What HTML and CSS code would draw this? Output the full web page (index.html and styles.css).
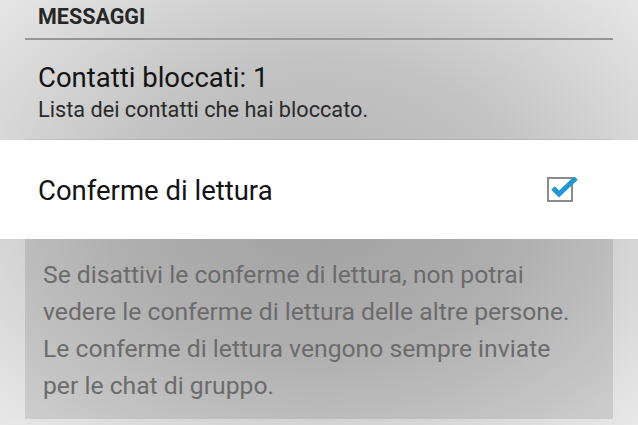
FILE: index.html
```html
<!DOCTYPE html>
<html lang="it">
<head>
    <meta charset="UTF-8">
    <meta name="viewport" content="width=device-width, initial-scale=1.0">
    <title>Impostazioni privacy</title>
    <link rel="stylesheet" href="styles.css">
</head>
<body>
<div class="screen">
    <!-- Categoria -->
    <div class="category">MESSAGGI</div>

    <!-- Contatti bloccati -->
    <div class="pref">
        <div class="pref-title">Contatti bloccati: 1</div>
        <div class="pref-summary">Lista dei contatti che hai bloccato.</div>
    </div>

    <!-- Riga evidenziata con checkbox -->
    <div class="toggle-row">
        <span class="pref-title">Conferme di lettura</span>
        <svg class="checkbox" width="31" height="26" viewBox="0 0 31 26" aria-label="Attivo">
            <rect x="1" y="1" width="24" height="23" fill="none" stroke="#8c8c8c" stroke-width="2"/>
            <polyline points="6,11 12,17 29,1" fill="none" stroke="#1f97d4" stroke-width="5" stroke-linejoin="miter"/>
        </svg>
    </div>

    <!-- Nota esplicativa -->
    <div class="note">
        Se disattivi le conferme di lettura, non potrai vedere le conferme di lettura delle altre persone. Le conferme di lettura vengono sempre inviate per le chat di gruppo.
    </div>
</div>
</body>
</html>
```

FILE: styles.css
```css
/* Sfondo con vignettatura grigia */
body {
    margin: 0;
    padding: 0;
    width: 638px;
    height: 425px;
    overflow: hidden;
    font-family: Roboto, "Liberation Sans", sans-serif;
    background: radial-gradient(ellipse 70% 75% at 50% 48%, #b3b3b3 0%, #c3c3c3 45%, #e9e9e9 100%);
}

.screen {
    display: flex;
    flex-direction: column;
}

/* Intestazione della categoria */
.category {
    margin: 0 25px;
    padding: 4px 13px 8px;
    font-size: 21.5px;
    line-height: 26px;
    font-weight: bold;
    color: #262626;
    border-bottom: 2px solid #969696;
}

.pref {
    margin: 0 25px;
    padding: 22px 13px 16px;
    border-bottom: 1px solid rgba(0, 0, 0, 0.07);
}

.pref-title {
    font-size: 27.5px;
    line-height: 32px;
    color: #141414;
}

.pref-summary {
    margin-top: 3px;
    font-size: 21.7px;
    line-height: 26px;
    color: #2a2a2a;
}

/* Riga bianca in evidenza */
.toggle-row {
    height: 99px;
    padding: 2px 60px 0 38px;
    box-sizing: border-box;
    display: flex;
    align-items: center;
    justify-content: space-between;
    background-color: #FFFFFF;
}

.checkbox {
    display: block;
    margin-top: -2px;
}

/* Box grigio con la spiegazione */
.note {
    margin: 0 25px;
    padding: 17px 30px 15px 18px;
    background-color: rgba(0, 0, 0, 0.1);
    font-size: 24.7px;
    line-height: 37px;
    color: #6b6b6b;
}
```
